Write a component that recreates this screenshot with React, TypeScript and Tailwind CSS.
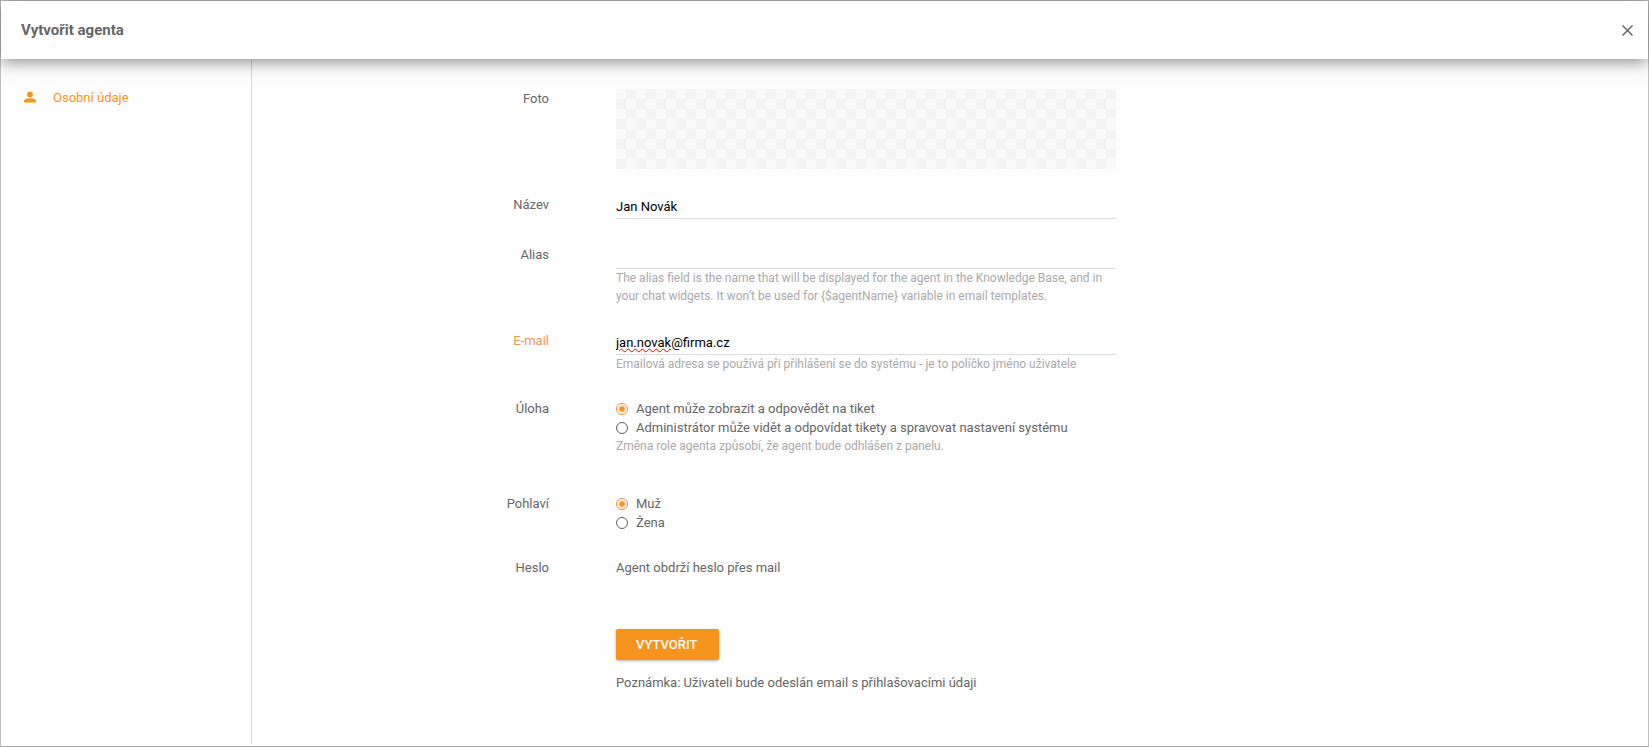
import { useId, useState } from "react"
import type { ReactNode } from "react"

const roles = [
  { value: "agent", label: "Agent může zobrazit a odpovědět na tiket" },
  { value: "admin", label: "Administrátor může vidět a odpovídat tikety a spravovat nastavení systému" },
]

const genders = [
  { value: "male", label: "Muž" },
  { value: "female", label: "Žena" },
]

function Row({ children, className = "" }: { children: ReactNode; className?: string }) {
  return (
    <div className={`grid grid-cols-[297px_minmax(0,500px)] gap-x-[67px] ${className}`}>{children}</div>
  )
}

function Hint({ id, children }: { id: string; children: ReactNode }) {
  return (
    <p id={id} className="text-[12px] leading-[18px] text-[#aaaaaa]">
      {children}
    </p>
  )
}

type TextFieldProps = {
  label: string
  value: string
  onChange: (value: string) => void
  hint?: string
  required?: boolean
  misspelled?: boolean
}

function TextField({ label, value, onChange, hint, required, misspelled }: TextFieldProps) {
  const id = useId()
  // the squiggle sits under the local part of the address
  const local = value.split("@")[0]

  return (
    <Row>
      <label htmlFor={id} className={`text-right ${required ? "text-[#f9944a]" : ""}`}>
        {label}
      </label>
      <div>
        <div className="relative">
          <input
            id={id}
            type="text"
            value={value}
            spellCheck={false}
            onChange={(e) => onChange(e.target.value)}
            aria-describedby={hint ? `${id}-hint` : undefined}
            className="block h-6 w-full border-b border-[#dadada] bg-transparent text-black outline-none focus:border-[#f7941e]"
          />
          {misspelled && (
            <span
              aria-hidden="true"
              className="pointer-events-none absolute left-0 top-0 select-none text-transparent underline decoration-[#ff0000] decoration-wavy decoration-1 underline-offset-1 leading-[23px]"
            >
              {local}
            </span>
          )}
        </div>
        {hint && <Hint id={`${id}-hint`}>{hint}</Hint>}
      </div>
    </Row>
  )
}

type RadioFieldProps = {
  label: string
  options: { value: string; label: string }[]
  value: string
  onChange: (value: string) => void
  hint?: string
  className?: string
}

function RadioField({ label, options, value, onChange, hint, className }: RadioFieldProps) {
  const id = useId()

  return (
    <Row className={className}>
      <span id={`${id}-label`} className="text-right">
        {label}
      </span>
      <div role="radiogroup" aria-labelledby={`${id}-label`}>
        {options.map((option) => (
          <label key={option.value} className="flex cursor-pointer items-center gap-2">
            <input
              type="radio"
              name={id}
              value={option.value}
              checked={value === option.value}
              onChange={() => onChange(option.value)}
              className="size-3 shrink-0 appearance-none rounded-full border border-[#5f5f5f] checked:border-[#f7893a] checked:bg-[radial-gradient(circle,#f7941e_2px,transparent_4px)]"
            />
            {option.label}
          </label>
        ))}
        {hint && <Hint id={`${id}-hint`}>{hint}</Hint>}
      </div>
    </Row>
  )
}

export default function App() {
  const [name, setName] = useState("Jan Novák")
  const [alias, setAlias] = useState("")
  const [email, setEmail] = useState("jan.novak@firma.cz")
  const [role, setRole] = useState("agent")
  const [gender, setGender] = useState("male")

  return (
    <div className="flex min-h-screen flex-col border border-[#c0c0c0] border-b-[#aaaaaa] bg-[#fefefe] font-[Roboto,sans-serif] text-[13px] leading-[19px] text-[#666666]">
      <header className="z-10 flex h-[58px] items-center justify-between bg-white pl-5 pr-[15px] shadow-[0_2px_16px_rgba(0,0,0,0.5)]">
        <h1 className="text-[15px] font-bold">Vytvořit agenta</h1>
        <button type="button" aria-label="Zavřít" className="cursor-pointer">
          <svg viewBox="0 0 11 11" className="size-[11px]" fill="none" stroke="currentColor" strokeWidth="1.5">
            <path d="M.5.5l10 10M10.5.5l-10 10" />
          </svg>
        </button>
      </header>

      <div className="flex flex-1 pb-0.5">
        <nav className="w-[251px] shrink-0 border-r border-[#dadada] pt-[29px]">
          <a href="#osobni-udaje" className="flex items-center gap-[17px] pl-[23px] text-[#f7941e]">
            <svg viewBox="0 0 12 12" className="mb-0.5 size-3" fill="currentColor">
              <circle cx="6" cy="3.4" r="2.9" />
              <path d="M0 11.5V10c0-2 3.5-2.8 6-2.8s6 .8 6 2.8v1.5z" />
            </svg>
            Osobní údaje
          </a>
        </nav>

        <main className="flex-1">
          <form
            id="osobni-udaje"
            className="flex flex-col gap-[26px] pb-12 pt-[30px]"
            onSubmit={(e) => e.preventDefault()}
          >
            <Row>
              <span className="text-right">Foto</span>
              <div
                role="img"
                aria-label="Foto"
                className="h-20 bg-[conic-gradient(#f4f4f4_25%,#fafafa_0_50%,#f4f4f4_0_75%,#fafafa_0)] bg-[length:20px_20px]"
              />
            </Row>

            <TextField label="Název" value={name} onChange={setName} />
            <TextField
              label="Alias"
              value={alias}
              onChange={setAlias}
              hint="The alias field is the name that will be displayed for the agent in the Knowledge Base, and in your chat widgets. It won’t be used for {$agentName} variable in email templates."
            />
            <TextField
              label="E-mail"
              value={email}
              onChange={setEmail}
              required
              misspelled
              hint="Emailová adresa se používá při přihlášení se do systému - je to políčko jméno uživatele"
            />

            <RadioField
              label="Úloha"
              options={roles}
              value={role}
              onChange={setRole}
              hint="Změna role agenta způsobí, že agent bude odhlášen z panelu."
              className="mb-[13px]"
            />
            <RadioField label="Pohlaví" options={genders} value={gender} onChange={setGender} />

            <Row>
              <span className="text-right">Heslo</span>
              <p>Agent obdrží heslo přes mail</p>
            </Row>

            <Row className="mt-[26px]">
              <div className="col-start-2 flex flex-col items-start gap-[13px]">
                <button
                  type="submit"
                  className="cursor-pointer rounded-[2px] bg-[#f7941e] py-1.5 pl-5 pr-[22px] font-medium uppercase text-white shadow-[0_1px_3px_rgba(0,0,0,0.3)]"
                >
                  Vytvořit
                </button>
                <p>Poznámka: Uživateli bude odeslán email s přihlašovacími údaji</p>
              </div>
            </Row>
          </form>
        </main>
      </div>
    </div>
  )
}
